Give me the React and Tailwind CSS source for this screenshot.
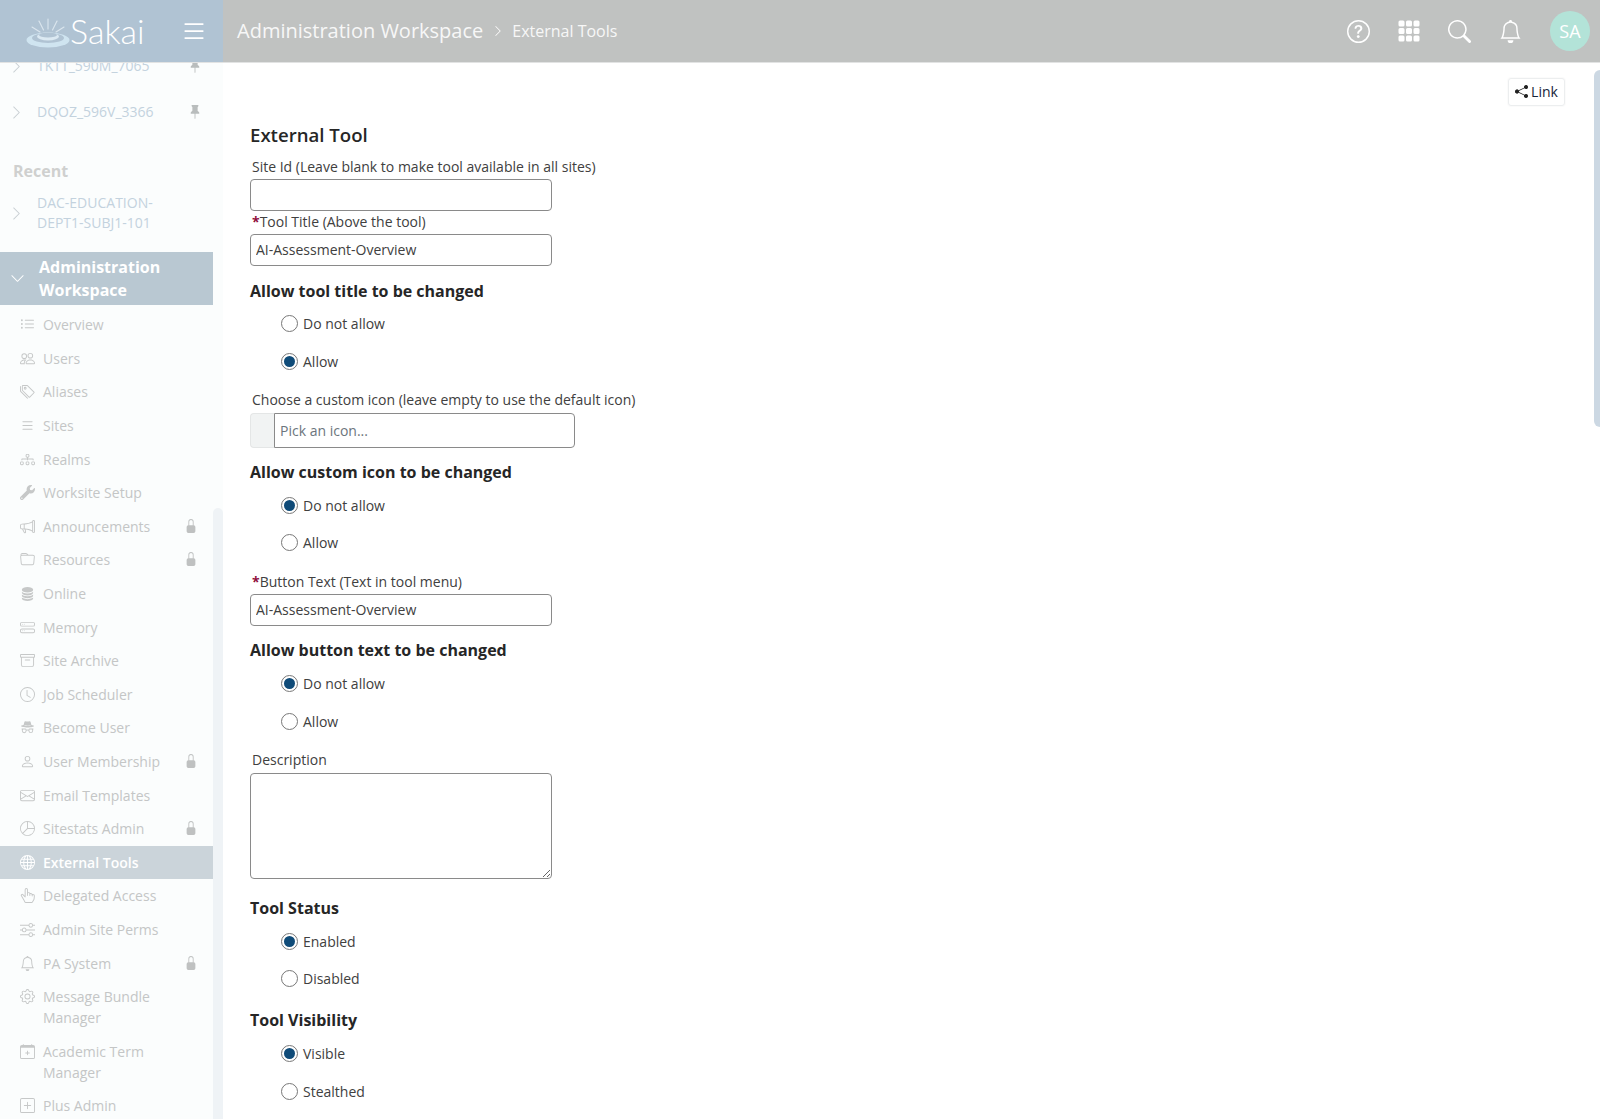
import {
  BsArchive, BsBell, BsCalendarPlus, BsChevronDown, BsChevronRight, BsClock, BsDatabaseFill,
  BsDiagram3, BsEnvelope, BsFolder, BsGear, BsGlobe, BsGrid3X3GapFill, BsHandIndexThumb, BsHddStack,
  BsIncognito, BsList, BsListUl, BsLockFill, BsMegaphone, BsPeople, BsPerson, BsPieChart,
  BsPinFill, BsPlusSquare, BsQuestionCircle, BsSearch, BsShareFill, BsSliders, BsTags,
} from 'react-icons/bs';
import { FaWrench } from 'react-icons/fa';

const TOOLS = [
  { name: 'Overview', icon: BsListUl },
  { name: 'Users', icon: BsPeople },
  { name: 'Aliases', icon: BsTags },
  { name: 'Sites', icon: BsList },
  { name: 'Realms', icon: BsDiagram3 },
  { name: 'Worksite Setup', icon: FaWrench },
  { name: 'Announcements', icon: BsMegaphone, locked: true },
  { name: 'Resources', icon: BsFolder, locked: true },
  { name: 'Online', icon: BsDatabaseFill },
  { name: 'Memory', icon: BsHddStack },
  { name: 'Site Archive', icon: BsArchive },
  { name: 'Job Scheduler', icon: BsClock },
  { name: 'Become User', icon: BsIncognito },
  { name: 'User Membership', icon: BsPerson, locked: true },
  { name: 'Email Templates', icon: BsEnvelope },
  { name: 'Sitestats Admin', icon: BsPieChart, locked: true },
  { name: 'External Tools', icon: BsGlobe, active: true },
  { name: 'Delegated Access', icon: BsHandIndexThumb },
  { name: 'Admin Site Perms', icon: BsSliders },
  { name: 'PA System', icon: BsBell, locked: true },
  { name: 'Message Bundle Manager', icon: BsGear },
  { name: 'Academic Term Manager', icon: BsCalendarPlus },
  { name: 'Plus Admin', icon: BsPlusSquare },
];

function Logo() {
  return (
    <svg width="44" height="30" viewBox="0 0 44 30" className="mt-[4px] shrink-0" aria-hidden>
      <g stroke="#dbe6ee" strokeWidth="1.1" strokeLinecap="round">
        <line x1="22" y1="1" x2="22" y2="11" />
        <line x1="13" y1="3" x2="17.5" y2="12" />
        <line x1="31" y1="3" x2="26.5" y2="12" />
        <line x1="6" y1="9" x2="14" y2="14" />
        <line x1="38" y1="9" x2="30" y2="14" />
      </g>
      <ellipse cx="22" cy="22" rx="21.5" ry="7.5" fill="#cfe4f0" />
      <ellipse cx="22" cy="20" rx="16" ry="5" fill="#b0c3d3" />
      <ellipse cx="22" cy="18.5" rx="11" ry="4" fill="#dbe9f2" />
      <ellipse cx="22" cy="17" rx="9" ry="2.6" fill="#b0c3d3" />
    </svg>
  );
}

function Header() {
  return (
    <header className="flex h-[63px] shrink-0 items-stretch border-b border-[#e2e3e3] bg-[#c0c2c1] text-white">
      <div className="flex w-[223px] shrink-0 items-center bg-[#b0c3d3] pl-[26px]">
        <Logo />
        <span className="font-['Lato',sans-serif] text-[34px] leading-none font-light">Sakai</span>
        <BsList className="ml-[35px] text-[28px]" />
      </div>
      <div className="flex flex-1 items-center pl-[14px] pr-[10px]">
        <span className="text-[20px] text-[#f7f7f7]">Administration Workspace</span>
        <BsChevronRight className="mx-[9px] text-[12px]" />
        <span className="-ml-[1px] text-[16px] text-[#f7f7f7]">External Tools</span>
        <div className="ml-auto flex items-center">
          <BsQuestionCircle className="text-[23px]" />
          <BsGrid3X3GapFill className="ml-[27px] text-[24px]" />
          <BsSearch className="ml-[27px] text-[23px]" />
          <BsBell className="ml-[28px] text-[23px]" />
          <span className="ml-[28px] flex h-10 w-10 items-center justify-center rounded-full bg-[#b3e3d8] text-[18px]">SA</span>
        </div>
      </div>
    </header>
  );
}

function SiteRow({ name, pinned }) {
  return (
    <div className="flex h-[46px] items-center pl-[9px] pr-[11px] text-[14px] text-[#c3d2de]">
      <BsChevronRight className="shrink-0 text-[15px] text-[#c9cfd3]" />
      <span className="ml-[13px] flex-1 leading-[20px]">{name}</span>
      {pinned && <BsPinFill className="text-[14px] text-[#b9bdbd]" />}
    </div>
  );
}

function ToolRow({ tool }) {
  const Icon = tool.icon;
  return (
    <div
      className={
        tool.active
          ? 'flex items-start bg-[#cbd4da] py-[6.3px] pl-[20px] pr-[15px] text-[14px] leading-[21px] font-semibold text-white'
          : 'flex items-start py-[6.3px] pl-[20px] pr-[15px] text-[14px] leading-[21px] text-[#c4c6c6]'
      }
    >
      <Icon className={`mt-[3px] h-[15px] w-[15px] shrink-0 ${tool.active ? 'text-white' : 'text-[#c6c8c8]'}`} />
      <span className="ml-[8px] flex-1">{tool.name}</span>
      {tool.locked && <BsLockFill className="mt-[3px] h-[14px] w-[14px] shrink-0 text-[#bfc1c1]" />}
    </div>
  );
}

function Sidebar() {
  return (
    <aside className="flex w-[223px] shrink-0 overflow-hidden bg-[#fbfdfd]">
      <div className="-mt-[20px] w-[213px] shrink-0">
        <SiteRow name="TKTT_590M_7065" pinned />
        <SiteRow name="DQOZ_596V_3366" pinned />
        <p className="mt-[25px] pl-[13px] text-[16px] leading-[22px] font-bold text-[#cfd0cf]">Recent</p>
        <div className="mt-[11px] flex items-center pl-[9px] pr-[18px] text-[14px] leading-[20px] text-[#c3d2de]">
          <BsChevronRight className="shrink-0 text-[15px] text-[#c9cfd3]" />
          <span className="ml-[13px] flex-1">DAC-EDUCATION-<br />DEPT1-SUBJ1-101</span>
        </div>
        <div className="mt-[19px] flex h-[53px] items-center bg-[#b9c8d2] pl-[10px] text-[16px] leading-[23px] font-bold text-white">
          <BsChevronDown className="shrink-0 text-[15px]" />
          <span className="ml-[14px]">Administration<br />Workspace</span>
        </div>
        <nav className="mt-[3px]">
          {TOOLS.map((tool) => <ToolRow key={tool.name} tool={tool} />)}
        </nav>
      </div>
      <div className="mt-[445px] w-[10px] rounded-t-md bg-[#eff3f6]" />
    </aside>
  );
}

function Label({ children, required, className }) {
  return (
    <label className={`block h-[20px] pl-[2px] text-[14px] leading-[20px] text-[#404040] ${className}`}>
      {required && <span className="font-bold text-[#8f0f3c]">*</span>}
      {children}
    </label>
  );
}

function TextInput({ value, className }) {
  return (
    <input
      readOnly
      value={value}
      className={`block h-[32px] w-[301.5px] rounded-[4px] border border-[#8a8a8a] bg-white px-[5px] pb-[2px] text-[14px] text-[#404040] ${className}`}
    />
  );
}

function Heading({ children, className }) {
  return <h3 className={`h-[22px] text-[16px] leading-[22px] font-bold text-[#262626] ${className}`}>{children}</h3>;
}

function Radio({ label, checked }) {
  return (
    <div className="flex h-[37.4px] items-center pl-[30.5px]">
      <span className="flex h-[17px] w-[17px] shrink-0 items-center justify-center rounded-full border border-[#777] bg-white">
        {checked && <span className="h-[11px] w-[11px] rounded-full bg-[#0f4b78]" />}
      </span>
      <span className="ml-[5.5px] text-[14px] text-[#404040]">{label}</span>
    </div>
  );
}

function RadioGroup({ options, selected, className = 'mt-[3.3px]' }) {
  return (
    <div className={className}>
      {options.map((o) => <Radio key={o} label={o} checked={o === selected} />)}
    </div>
  );
}

function Main() {
  const allow = ['Do not allow', 'Allow'];
  return (
    <main className="relative min-w-0 flex-1 overflow-hidden bg-white pt-[15px] pl-[27px] pr-[35px]">
      <div className="flex justify-end">
        <button className="flex h-[28px] w-[57px] items-center justify-center gap-[3px] rounded-[3px] border border-[#eceeef] pb-[1px] text-[14px] text-[#16243a] shadow-[0_0_2px_#eeeeee]">
          <BsShareFill className="text-[13px] text-[#222]" />
          Link
        </button>
      </div>
      <h2 className="mt-[17px] text-[18.6px] leading-[24px] font-semibold text-[#262626]">External Tool</h2>
      <Label className="mt-[10px]">Site Id (Leave blank to make tool available in all sites)</Label>
      <TextInput value="" className="mt-[2px]" />
      <Label required className="mt-[1px]">Tool Title (Above the tool)</Label>
      <TextInput value="AI-Assessment-Overview" className="mt-[2px]" />
      <Heading className="mt-[14px]">Allow tool title to be changed</Heading>
      <RadioGroup options={allow} selected="Allow" />
      <Label className="mt-[10px]">Choose a custom icon (leave empty to use the default icon)</Label>
      <div className="mt-[3px] flex h-[35px] w-[325px]">
        <span className="w-[24px] rounded-l-[4px] border border-r-0 border-[#e4e6e6] bg-[#f1f3f3]" />
        <input
          readOnly
          placeholder="Pick an icon..."
          className="min-w-0 flex-1 rounded-r-[4px] border border-[#8a8a8a] bg-white px-[5px] pb-[1px] text-[14px] placeholder:text-[#6c757d]"
        />
      </div>
      <Heading className="mt-[13px]">Allow custom icon to be changed</Heading>
      <RadioGroup options={allow} selected="Do not allow" />
      <Label required className="mt-[10.5px]">Button Text (Text in tool menu)</Label>
      <TextInput value="AI-Assessment-Overview" className="mt-[2.5px]" />
      <Heading className="mt-[13px]">Allow button text to be changed</Heading>
      <RadioGroup options={allow} selected="Do not allow" className="mt-[3.8px]" />
      <Label className="mt-[10.5px]">Description</Label>
      <textarea readOnly className="mt-[3px] block h-[106px] w-[301.5px] rounded-[4px] border border-[#8a8a8a] bg-white" />
      <Heading className="mt-[18px]">Tool Status</Heading>
      <RadioGroup options={['Enabled', 'Disabled']} selected="Enabled" />
      <Heading className="mt-[11.5px]">Tool Visibility</Heading>
      <RadioGroup options={['Visible', 'Stealthed']} selected="Visible" className="mt-[4.3px]" />
      <div className="absolute top-[7px] right-0 h-[357px] w-[6px] rounded-l-md bg-[#ccd8e3]" />
    </main>
  );
}

export default function App() {
  return (
    <div className="flex h-[1119px] flex-col overflow-hidden bg-white font-['Open_Sans',sans-serif]">
      <Header />
      <div className="flex min-h-0 flex-1">
        <Sidebar />
        <Main />
      </div>
    </div>
  );
}
